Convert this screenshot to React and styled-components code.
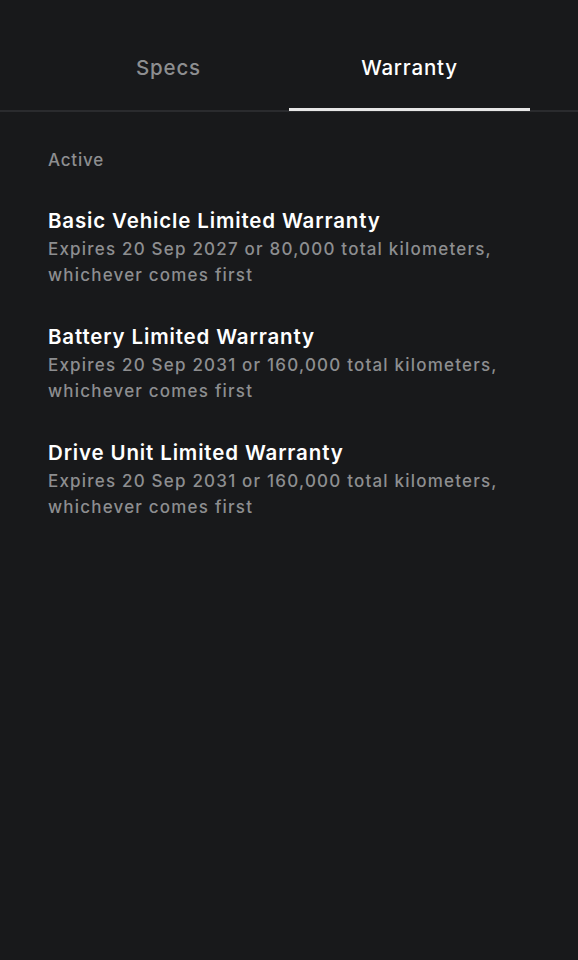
import React, {useState} from "react";
import styled, {createGlobalStyle} from "styled-components";

const GlobalStyle = createGlobalStyle`
  html, body {
    margin: 0;
    padding: 0;
    background: #18191b;
  }
  body {
    font-family: Inter, "Open Sans", sans-serif;
    -webkit-font-smoothing: antialiased;
  }
`;

const Page = styled.div`
  min-height: 960px;
  background: #18191b;
  color: #f2f2f2;
`;

const TabBar = styled.div`
  display: flex;
  padding: 0 48px;
  border-bottom: 2px solid #2a2b2e;
`;

const Tab = styled.button`
  flex: 1;
  height: 111px;
  padding: 27px 0 0;
  background: none;
  border: none;
  border-bottom: 3px solid ${props => props.active ? "#e6e6e6" : "transparent"};
  margin-bottom: -1px;
  color: ${props => props.active ? "#ffffff" : "#8d8e90"};
  font-family: inherit;
  font-size: 20.5px;
  font-weight: 500;
  letter-spacing: 0.8px;
  cursor: pointer;
`;

const Content = styled.div`
  padding: 38px 48px 0;
`;

const SectionLabel = styled.div`
  font-size: 17px;
  font-weight: 500;
  letter-spacing: 0.8px;
  color: #8d8e90;
  margin-bottom: 36px;
`;

const WarrantyItem = styled.div`
  margin-bottom: 34px;
`;

const Title = styled.div`
  font-size: 20.5px;
  font-weight: 600;
  letter-spacing: 0.85px;
  color: #ffffff;
  line-height: 30px;
`;

const Detail = styled.div`
  font-size: 17px;
  font-weight: 500;
  letter-spacing: 1.2px;
  color: #8d8e90;
  line-height: 26px;
`;

const warranties = [
  {title: "Basic Vehicle Limited Warranty", detail: "Expires 20 Sep 2027 or 80,000 total kilometers, whichever comes first"},
  {title: "Battery Limited Warranty", detail: "Expires 20 Sep 2031 or 160,000 total kilometers, whichever comes first"},
  {title: "Drive Unit Limited Warranty", detail: "Expires 20 Sep 2031 or 160,000 total kilometers, whichever comes first"},
];

export default function App() {
  const [tab, setTab] = useState("warranty");

  return (
    <Page>
      <GlobalStyle />
      <TabBar>
        <Tab active={tab === "specs"} onClick={() => setTab("specs")}>Specs</Tab>
        <Tab active={tab === "warranty"} onClick={() => setTab("warranty")}>Warranty</Tab>
      </TabBar>
      <Content>
        <SectionLabel>Active</SectionLabel>
        {warranties.map(w => (
          <WarrantyItem key={w.title}>
            <Title>{w.title}</Title>
            <Detail>{w.detail}</Detail>
          </WarrantyItem>
        ))}
      </Content>
    </Page>
  );
}
